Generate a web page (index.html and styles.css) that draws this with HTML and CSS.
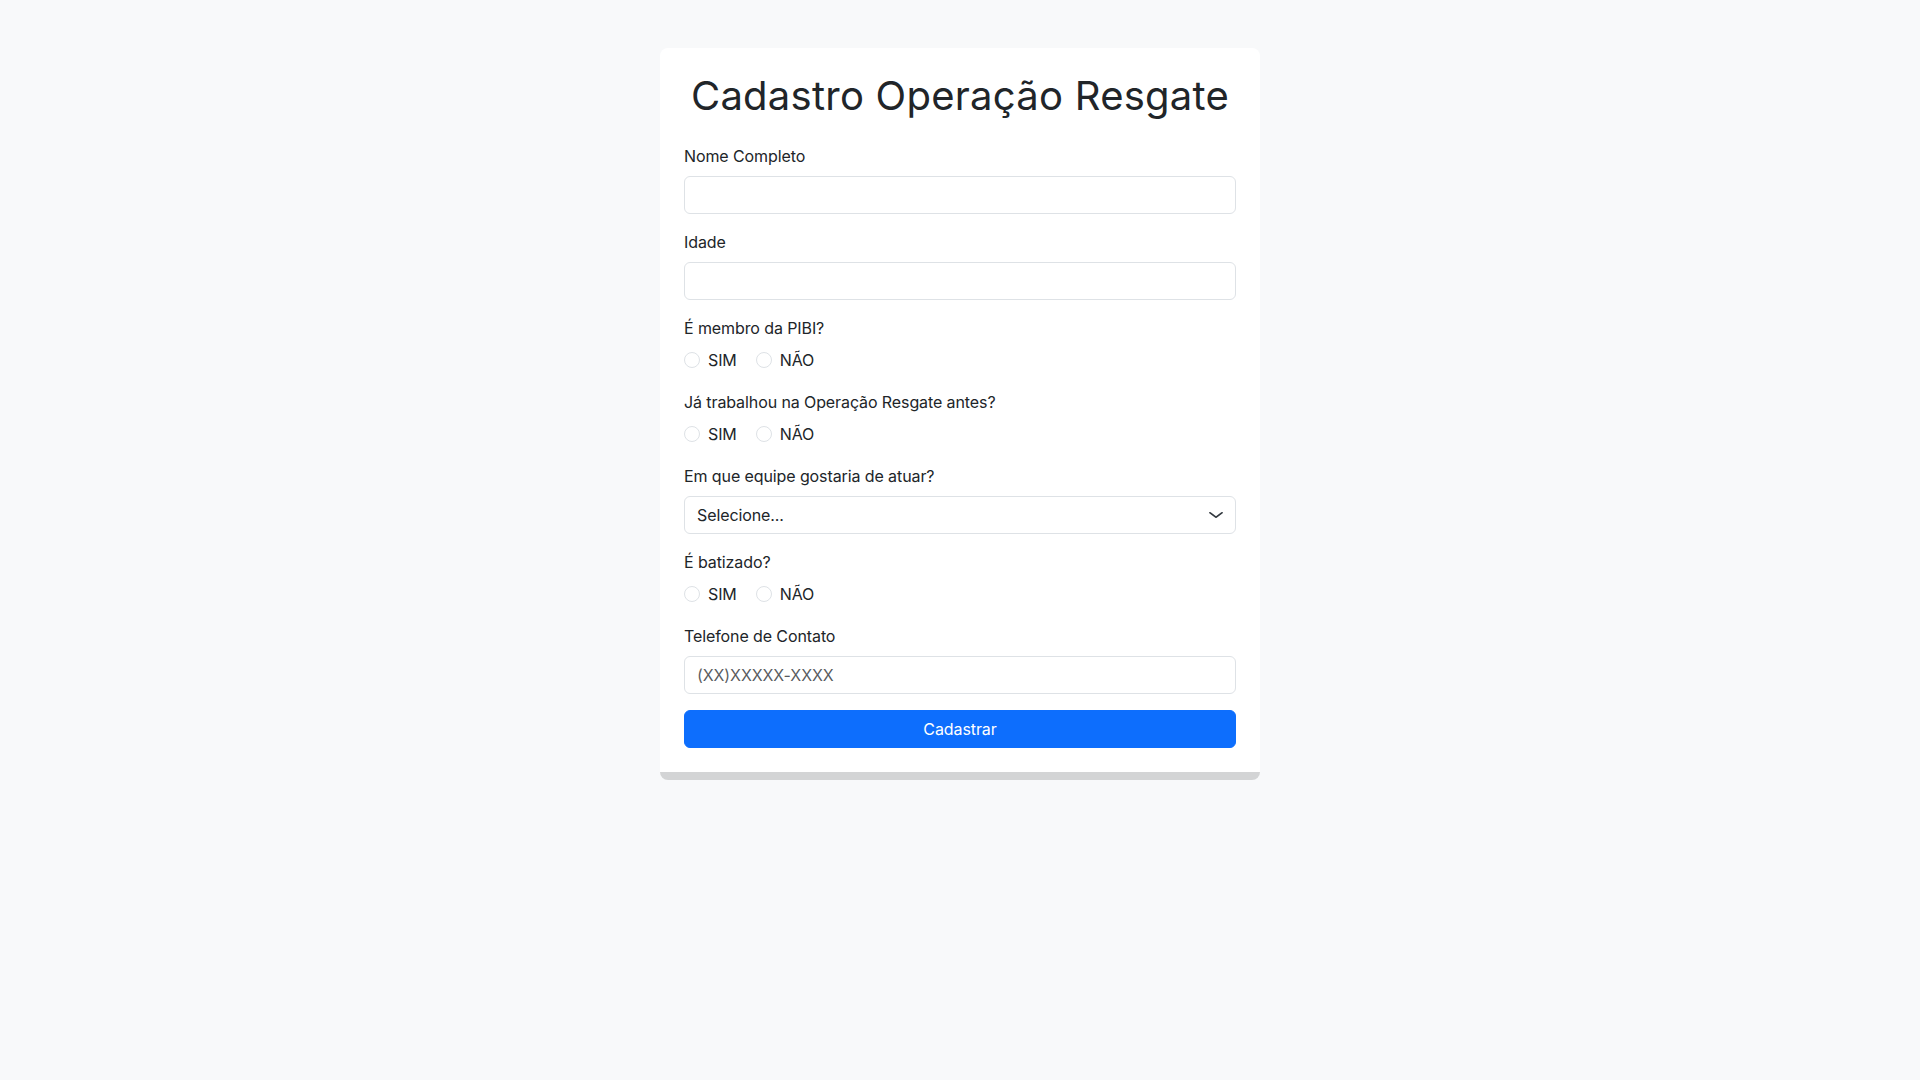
FILE: index.html
```html
<!DOCTYPE html>
<html lang="pt-BR">
  <head>
    <meta charset="utf-8">
    <title>Cadastro Operação Resgate</title>
    <link rel="stylesheet" href="styles.css">
  </head>
  <body>
    <div class="card">
      <h1>Cadastro Operação Resgate</h1>
      <form>
        <div class="group">
          <label class="form-label" for="nome">Nome Completo</label>
          <input class="form-control" type="text" id="nome">
        </div>
        <div class="group">
          <label class="form-label" for="idade">Idade</label>
          <input class="form-control" type="number" id="idade">
        </div>
        <div class="group">
          <label class="form-label">É membro da PIBI?</label>
          <div class="checks">
            <div class="form-check"><input class="radio" type="radio" name="membro" id="membro-sim"><label for="membro-sim">SIM</label></div>
            <div class="form-check"><input class="radio" type="radio" name="membro" id="membro-nao"><label for="membro-nao">NÃO</label></div>
          </div>
        </div>
        <div class="group">
          <label class="form-label">Já trabalhou na Operação Resgate antes?</label>
          <div class="checks">
            <div class="form-check"><input class="radio" type="radio" name="antes" id="antes-sim"><label for="antes-sim">SIM</label></div>
            <div class="form-check"><input class="radio" type="radio" name="antes" id="antes-nao"><label for="antes-nao">NÃO</label></div>
          </div>
        </div>
        <div class="group">
          <label class="form-label" for="equipe">Em que equipe gostaria de atuar?</label>
          <div class="select-wrap">
            <select class="form-select" id="equipe">
              <option>Selecione...</option>
            </select>
            <svg class="chevron" viewBox="0 0 16 16" width="16" height="12" preserveAspectRatio="none"><path d="m2 5 6 6 6-6" fill="none" stroke="#343a40" stroke-width="2" stroke-linecap="round" stroke-linejoin="round"/></svg>
          </div>
        </div>
        <div class="group">
          <label class="form-label">É batizado?</label>
          <div class="checks">
            <div class="form-check"><input class="radio" type="radio" name="batizado" id="bat-sim"><label for="bat-sim">SIM</label></div>
            <div class="form-check"><input class="radio" type="radio" name="batizado" id="bat-nao"><label for="bat-nao">NÃO</label></div>
          </div>
        </div>
        <div class="group">
          <label class="form-label" for="telefone">Telefone de Contato</label>
          <input class="form-control" type="tel" id="telefone" placeholder="(XX)XXXXX-XXXX">
        </div>
        <button class="btn" type="submit">Cadastrar</button>
      </form>
    </div>
  </body>
</html>
```
FILE: styles.css
```css
body {
  margin: 0;
  background-color: #f8f9fa;
  color: #212529;
  font-family: 'Inter', 'Noto Sans', sans-serif;
  font-size: 16px;
  line-height: 1.5;
  letter-spacing: -0.1px;
}
.card {
  width: 600px;
  box-sizing: border-box;
  margin: 48px auto 0;
  padding: 24px;
  background-color: #fff;
  border-bottom: 8px solid #d3d4d5;
  border-radius: 8px;
}
h1 {
  margin: 0 0 24px;
  font-size: 40px;
  font-weight: 400;
  line-height: 1.2;
  letter-spacing: 0.25px;
  text-align: center;
}
.group {
  margin-bottom: 16px;
}
.form-label {
  display: inline-block;
  margin-bottom: 8px;
}
.form-control,
.form-select {
  display: block;
  width: 100%;
  box-sizing: border-box;
  height: 38px;
  padding: 6px 12px;
  font-family: inherit;
  font-size: 16px;
  line-height: 1.5;
  letter-spacing: inherit;
  color: #212529;
  background-color: #fff;
  border: 1px solid #dee2e6;
  border-radius: 6px;
  outline: none;
}
.form-control::placeholder {
  color: rgba(33, 37, 41, 0.75);
}
.form-select {
  appearance: none;
  padding-right: 36px;
}
.select-wrap {
  position: relative;
}
.chevron {
  position: absolute;
  right: 12px;
  top: 13px;
  pointer-events: none;
}
.checks {
  font-size: 0;
}
.form-check {
  display: inline-block;
  min-height: 24px;
  margin: 0 16px 2px 0;
  padding-left: 24px;
  font-size: 16px;
  vertical-align: top;
}
.form-check + .form-check {
  margin-left: 3px;
}
.radio {
  appearance: none;
  float: left;
  width: 16px;
  height: 16px;
  margin: 4px 0 0 -24px;
  border: 1px solid #dee2e6;
  border-radius: 50%;
  background-color: #fff;
}
.radio:checked {
  background-color: #0d6efd;
  border-color: #0d6efd;
}
.btn {
  display: block;
  width: 100%;
  height: 38px;
  padding: 6px 12px;
  font-family: inherit;
  font-size: 16px;
  line-height: 1.5;
  letter-spacing: inherit;
  color: #fff;
  background-color: #0d6efd;
  border: 1px solid #0d6efd;
  border-radius: 6px;
}
```
